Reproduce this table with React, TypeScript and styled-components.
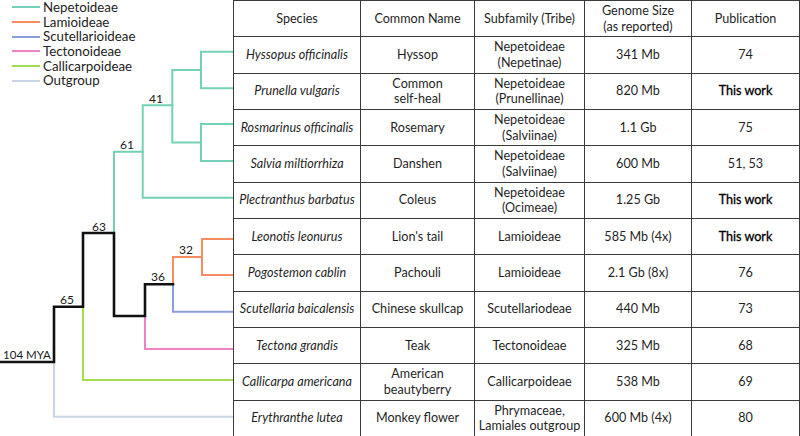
import React from "react";
import styled, { createGlobalStyle } from "styled-components";

const GlobalStyle = createGlobalStyle`
  html, body { margin: 0; padding: 0; background: #ffffff; }
  body { font-family: "Lato", "Open Sans", sans-serif; color: #1f1f1f; }
`;

const Page = styled.div`
  display: flex;
  width: 800px;
  height: 436px;
  background: #fff;
  overflow: hidden;
`;

const TreePanel = styled.div`
  position: relative;
  width: 233px;
  height: 436px;
  flex: none;
`;

const Legend = styled.ul`
  position: absolute;
  top: 0;
  left: 12px;
  margin: 0;
  padding: 0;
  list-style: none;
  display: flex;
  flex-direction: column;
`;

const LegendItem = styled.li`
  display: flex;
  align-items: center;
  gap: 3px;
  height: 14.7px;
  line-height: 14.7px;
  font-size: 13.3px;
  color: #222;
`;

const Swatch = styled.span<{ $color: string }>`
  width: 28px;
  height: 2px;
  background: ${(p) => p.$color};
`;

const TreeSvg = styled.svg`
  display: block;
  width: 233px;
  height: 436px;
`;

const Table = styled.table`
  border-collapse: collapse;
  table-layout: fixed;
  width: 566px;
  height: 436px;
  font-size: 12.6px;
  color: #1f1f1f;
`;

const Row = styled.tr`
  height: 36.33px;
`;

const HeadCell = styled.th`
  border: 1px solid #3a3a3a;
  font-weight: 400;
  text-align: center;
  vertical-align: middle;
  padding: 0 2px;
  line-height: 1.25;
`;

const Cell = styled.td<{ $italic?: boolean; $bold?: boolean }>`
  border: 1px solid #3a3a3a;
  text-align: center;
  vertical-align: middle;
  padding: 0 2px;
  line-height: 1.25;
  white-space: nowrap;
  font-style: ${(p) => (p.$italic ? "italic" : "normal")};
  color: ${(p) => (p.$bold ? "#000" : "#1f1f1f")};
  -webkit-text-stroke: ${(p) => (p.$bold ? "0.3px #000" : "0")};
`;

const COLORS = {
  nep: "#73d1b6",
  lam: "#f98c62",
  scu: "#8a9fd6",
  tec: "#ee82c4",
  cal: "#a6da4f",
  out: "#c9d5e4",
  black: "#111",
};

const legend = [
  { label: "Nepetoideae", color: COLORS.nep },
  { label: "Lamioideae", color: COLORS.lam },
  { label: "Scutellarioideae", color: COLORS.scu },
  { label: "Tectonoideae", color: COLORS.tec },
  { label: "Callicarpoideae", color: COLORS.cal },
  { label: "Outgroup", color: COLORS.out },
];

type RowData = [string, React.ReactNode, React.ReactNode, string, string];

const rows: RowData[] = [
  ["Hyssopus officinalis", "Hyssop", <>Nepetoideae<br />(Nepetinae)</>, "341 Mb", "74"],
  ["Prunella vulgaris", <>Common<br />self-heal</>, <>Nepetoideae<br />(Prunellinae)</>, "820 Mb", "This work"],
  ["Rosmarinus officinalis", "Rosemary", <>Nepetoideae<br />(Salviinae)</>, "1.1 Gb", "75"],
  ["Salvia miltiorrhiza", "Danshen", <>Nepetoideae<br />(Salviinae)</>, "600 Mb", "51, 53"],
  ["Plectranthus barbatus", "Coleus", <>Nepetoideae<br />(Ocimeae)</>, "1.25 Gb", "This work"],
  ["Leonotis leonurus", "Lion's tail", "Lamioideae", "585 Mb (4x)", "This work"],
  ["Pogostemon cablin", "Pachouli", "Lamioideae", "2.1 Gb (8x)", "76"],
  ["Scutellaria baicalensis", "Chinese skullcap", "Scutellariodeae", "440 Mb", "73"],
  ["Tectona grandis", "Teak", "Tectonoideae", "325 Mb", "68"],
  ["Callicarpa americana", <>American<br />beautyberry</>, "Callicarpoideae", "538 Mb", "69"],
  ["Erythranthe lutea", "Monkey flower", <>Phrymaceae,<br />Lamiales outgroup</>, "600 Mb (4x)", "80"],
];

const labels = [
  { t: "41", x: 156, y: 103 },
  { t: "61", x: 127, y: 149 },
  { t: "63", x: 99, y: 231 },
  { t: "32", x: 186, y: 254 },
  { t: "36", x: 158, y: 281 },
  { t: "65", x: 67, y: 304 },
];

function Tree() {
  return (
    <TreeSvg viewBox="0 0 233 436">
      <g fill="none" strokeLinejoin="miter" strokeLinecap="square">
        <path d="M54 362 V416.7 H233" stroke={COLORS.out} strokeWidth={2} />
        <path d="M83 306.7 V380 H233" stroke={COLORS.cal} strokeWidth={2} />
        <path d="M145 316 V349 H233" stroke={COLORS.tec} strokeWidth={2} />
        <path d="M173 284.3 V311.7 H233" stroke={COLORS.scu} strokeWidth={2} />
        <path d="M173 284.3 V257 H202" stroke={COLORS.lam} strokeWidth={2} />
        <path d="M233 239 H202 V275 H233" stroke={COLORS.lam} strokeWidth={2} />
        <path d="M114 233 V151.7 H142.7" stroke={COLORS.nep} strokeWidth={2} />
        <path d="M233 197.7 H142.7 V105.3 H172.3" stroke={COLORS.nep} strokeWidth={2} />
        <path d="M201 70 H172.3 V142.5 H201" stroke={COLORS.nep} strokeWidth={2} />
        <path d="M233 51.7 H201 V88.3 H233" stroke={COLORS.nep} strokeWidth={2} />
        <path d="M233 124 H201 V161 H233" stroke={COLORS.nep} strokeWidth={2} />
        <path
          d="M0 362 H54 V306.7 H83 V233 H114 V316 H145 V284.3 H173"
          stroke={COLORS.black}
          strokeWidth={2.6}
        />
      </g>
      <g fontFamily="Lato, 'Open Sans', sans-serif" fontSize={12} fill="#1a1a1a" textAnchor="middle">
        {labels.map((l) => (
          <text key={l.t} x={l.x} y={l.y}>
            {l.t}
          </text>
        ))}
        <text x={27} y={359} fontSize={11.5}>104 MYA</text>
      </g>
    </TreeSvg>
  );
}

export default function App() {
  return (
    <>
      <GlobalStyle />
      <Page>
        <TreePanel>
          <Tree />
          <Legend>
            {legend.map((l) => (
              <LegendItem key={l.label}>
                <Swatch $color={l.color} />
                {l.label}
              </LegendItem>
            ))}
          </Legend>
        </TreePanel>
        <Table>
          <colgroup>
            <col style={{ width: 127 }} />
            <col style={{ width: 114 }} />
            <col style={{ width: 110 }} />
            <col style={{ width: 107 }} />
            <col style={{ width: 108 }} />
          </colgroup>
          <thead>
            <Row>
              <HeadCell>Species</HeadCell>
              <HeadCell>Common Name</HeadCell>
              <HeadCell>Subfamily (Tribe)</HeadCell>
              <HeadCell>
                Genome Size
                <br />
                (as reported)
              </HeadCell>
              <HeadCell>Publication</HeadCell>
            </Row>
          </thead>
          <tbody>
            {rows.map((r, i) => (
              <Row key={i}>
                <Cell $italic>{r[0]}</Cell>
                <Cell>{r[1]}</Cell>
                <Cell>{r[2]}</Cell>
                <Cell>{r[3]}</Cell>
                <Cell $bold={r[4] === "This work"}>{r[4]}</Cell>
              </Row>
            ))}
          </tbody>
        </Table>
      </Page>
    </>
  );
}
